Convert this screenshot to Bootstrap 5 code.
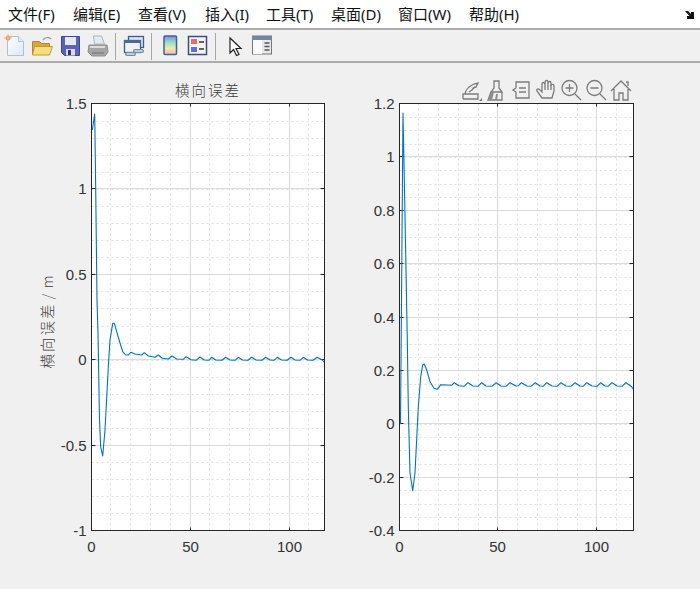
<!DOCTYPE html>
<html lang="zh">
<head>
    <meta charset="UTF-8">
    <title>Figure</title>
    <link rel="stylesheet" href="https://cdn.jsdelivr.net/npm/bootstrap@5.3.0/dist/css/bootstrap.min.css">
    <style>
        html, body { height: 100%; overflow: hidden; }
        body { background: #f0f0f0; font-family: "Noto Sans", "Noto Sans CJK SC", sans-serif; }

        .menu-strip { height: 30px; background: #fff; border-bottom: 2px solid #ababab; padding-left: 8px; }
        .menu-strip .nav-link { padding: 0; color: #111; font-size: 15px; line-height: 29px; width: 65px; white-space: nowrap; }
        .dock-arrow { right: 5px; top: 10px; }

        .tool-strip { height: 33px; background: #f0f0f0; border-bottom: 2px solid #ababab; padding: 1px 0 0 0; }
        .tool-btn { width: 28px; height: 28px; }
        .tool-sep { width: 1px; height: 27px; background: #a6a6a6; margin: 2px 4px 0 3px; }
        .tool-arrow { margin-left: 2px; }
        .tool-panel { margin-left: -2px; }
        .w-67 { width: 67px !important; }
        .w-61 { width: 61px !important; }
        .w-71 { width: 71px !important; }

        .figure-area { position: relative; padding-left: 30px; }
        .axes-tools { position: absolute; top: 15px; left: 460px; gap: 3px; }
        .axes-tool { width: 22px; height: 24px; }

        .plot-svg { display: block; width: 310px; height: 497px; flex: none; }
        .plot-svg text { font-family: "Liberation Sans", sans-serif; font-size: 15px; fill: #333; }
        .plot-svg text.cjk { font-family: "Noto Sans CJK SC", sans-serif; font-size: 14.5px; letter-spacing: 2px; fill: #3c3c3c; font-weight: 300; }
        .plot-svg text.cjk-y { word-spacing: -2px; }
        .ico-line { fill: none; stroke: #7c7c7c; stroke-width: 1.3; }
    </style>
</head>
<body>
    <div class="menu-strip position-relative">
        <ul class="nav flex-nowrap">
            <li class="nav-item"><a class="nav-link" href="#">文件(F)</a></li>
            <li class="nav-item"><a class="nav-link" href="#">编辑(E)</a></li>
            <li class="nav-item"><a class="nav-link w-67" href="#">查看(V)</a></li>
            <li class="nav-item"><a class="nav-link w-61" href="#">插入(I)</a></li>
            <li class="nav-item"><a class="nav-link" href="#">工具(T)</a></li>
            <li class="nav-item"><a class="nav-link w-67" href="#">桌面(D)</a></li>
            <li class="nav-item"><a class="nav-link w-71" href="#">窗口(W)</a></li>
            <li class="nav-item"><a class="nav-link" href="#">帮助(H)</a></li>
        </ul>
        <svg class="dock-arrow position-absolute" width="10" height="10" viewBox="0 0 10 10"><path d="M0 1h3l3 3V2h3v7H2V6h2.500z" fill="#111"/></svg>
    </div>

    <div class="tool-strip d-flex align-items-start">
        <svg class="tool-btn" viewBox="0 0 28 28">
            <defs><linearGradient id="pg" x1="0" y1="0" x2="1" y2="1"><stop offset="0" stop-color="#fff"/><stop offset="1" stop-color="#dbe8f5"/></linearGradient></defs>
            <path d="M7.500 5.500h11l5 5v14h-16z" fill="url(#pg)" stroke="#a9c1da"/>
            <path d="M18.500 5.500v5h5" fill="#e6eef7" stroke="#a9c1da"/>
            <circle cx="8" cy="7" r="2.500" fill="#f19a5c"/><path d="M8 3v8M4 7h8" stroke="#f4b48a"/>
        </svg>
        <svg class="tool-btn" viewBox="0 0 28 28">
            <path d="M4.500 10.500h7l2 2h8v11h-17z" fill="#d6a838" stroke="#b28a24"/>
            <path d="M6.500 15.500h18l-3 8.500h-17z" fill="#f7dc80" stroke="#c09a34"/>
            <path d="M15 9c2-3 6-3 8-1" fill="none" stroke="#93a3b3" stroke-width="1.5"/>
        </svg>
        <svg class="tool-btn" viewBox="0 0 28 28">
            <path d="M5.500 5.500h18v19h-15l-3-3z" fill="#5a63b8" stroke="#3e4796"/>
            <rect x="9" y="6" width="11" height="8" fill="#e8e8f4"/>
            <rect x="10" y="18" width="9" height="6.500" fill="#dcdce4"/><rect x="12" y="19" width="3" height="5" fill="#333a70"/>
        </svg>
        <svg class="tool-btn" viewBox="0 0 28 28">
            <path d="M9.500 5h8l3 8h-10z" fill="#e3ebf0" stroke="#aab4bb"/>
            <path d="M5 14h18l1 7-3 4H8l-4-4z" fill="#a5a5a5" stroke="#8c8c8c"/>
            <path d="M6 16h15" stroke="#dcdcdc" stroke-width="2"/><path d="M8 22h12" stroke="#707070"/>
        </svg>
        <div class="tool-sep"></div>
        <svg class="tool-btn" viewBox="0 0 28 28">
            <rect x="8.500" y="5.500" width="15" height="11" fill="#dfe6ee" stroke="#3e5c84" stroke-width="1.300"/>
            <rect x="4.500" y="9.500" width="16" height="12" fill="#eef2f6" stroke="#3e5c84" stroke-width="1.300"/>
            <path d="M4 9h17v3H4z" fill="#4a6a90"/>
            <path d="M7 23h7M15 20h7" stroke="#6f8dab" stroke-width="4" stroke-linecap="round" fill="none"/>
            <path d="M7 23h7M15 20h7" stroke="#d8e2ec" stroke-width="1.400" stroke-linecap="round" fill="none"/>
        </svg>
        <div class="tool-sep"></div>
        <svg class="tool-btn" viewBox="0 0 28 28">
            <defs><linearGradient id="cbar" x1="0" y1="0" x2="0" y2="1"><stop offset="0" stop-color="#7a90dc"/><stop offset=".35" stop-color="#9adccc"/><stop offset=".65" stop-color="#ecebaa"/><stop offset="1" stop-color="#f0bcb4"/></linearGradient></defs>
            <rect x="8" y="5" width="12.500" height="18.500" rx="1" fill="url(#cbar)" stroke="#44608a" stroke-width="1.500"/>
        </svg>
        <svg class="tool-btn" viewBox="0 0 28 28">
            <rect x="4.500" y="5.500" width="18" height="18" fill="#f2f4f8" stroke="#3a4f78" stroke-width="1.500"/>
            <rect x="7" y="8" width="6" height="5" fill="#ee6a6a"/><rect x="7" y="16" width="6" height="5" fill="#6a6ae0"/>
            <path d="M15 11h5M15 18h5" stroke="#333" stroke-width="1.400"/>
        </svg>
        <div class="tool-sep"></div>
        <svg class="tool-btn tool-arrow" viewBox="0 0 28 28">
            <path d="M8 7v15l3.500-3.500 3 6 2.500-1-3-6h5z" fill="#fff" stroke="#222" stroke-width="1.200"/>
        </svg>
        <svg class="tool-btn tool-panel" viewBox="0 0 28 28">
            <rect x="4.500" y="5" width="19" height="18" fill="#e8e8e8" stroke="#6d7780"/>
            <rect x="4" y="5" width="20" height="4" fill="#6f8a9e"/>
            <rect x="5" y="9" width="9" height="14" fill="#fbfbfb"/>
            <path d="M16.500 12h5M16.500 15.500h5M16.500 19h5" stroke="#555" stroke-width="1.400"/>
        </svg>
    </div>

    <div class="figure-area d-flex">
        <svg class="plot-svg" id="plotLeft" viewBox="30 63 310 497"></svg>
        <svg class="plot-svg" id="plotRight" viewBox="340 63 310 497"></svg>

        <div class="axes-tools position-absolute d-flex">
            <svg class="axes-tool" viewBox="0 0 22 24"><path class="ico-line" d="M3 21v-5h15v5H3M5 16c0-4 5-8 9-10l4-1-2 4c-2 0-3 1-4 3l-3 2"/><path d="M19 23l3-3v3z" fill="#7c7c7c"/></svg>
            <svg class="axes-tool" viewBox="0 0 22 24"><path class="ico-line" d="M9 3h5v7l3 4H6l3-4zM6 14l-3 8h14v-8"/><path d="M3 22l3-8h3l-2 8zM10 22l1-6 2 0-1 6z" fill="#8c8c8c"/></svg>
            <svg class="axes-tool" viewBox="0 0 22 24"><path class="ico-line" d="M6 4h13v16H6v-6l-3-2 3-2zM9 10h7M9 14h7"/></svg>
            <svg class="axes-tool" viewBox="0 0 22 24"><path class="ico-line" d="M7 20l-5-7c-1-2 1-3 3-1l2 2V6c0-2 2-2 3 0V4c0-2 3-2 3 0v1c1-2 3-2 3 0v2c1-1 3-1 3 1v5l-2 7z"/><path class="ico-line" d="M10 6v6M13 5v7M16 7v5"/></svg>
            <svg class="axes-tool" viewBox="0 0 22 24"><circle class="ico-line" cx="9.500" cy="10" r="7.500"/><path class="ico-line" d="M15 16l6 6M5.500 10h8M9.500 6v8"/></svg>
            <svg class="axes-tool" viewBox="0 0 22 24"><circle class="ico-line" cx="9.500" cy="10" r="7.500"/><path class="ico-line" d="M15 16l6 6M5.500 10h8"/></svg>
            <svg class="axes-tool" viewBox="0 0 22 24"><path class="ico-line" d="M1 13L11 3l10 10M4 11v11h5v-7h4v7h5V11M16 4h2v4"/></svg>
        </div>
    </div>

    <script>
        // same axes drawing for both plots, page coords in the viewBox
        function drawAxes(id, a) {
            var box = { l: a.left, r: a.left + a.width, t: 103.5, b: 530.5 };
            var out = '';
            var xPos = function (v) { return Math.round(a.x0 + v * 1.98) + .5; };
            var yPos = function (v) { return box.b - (v - a.yMin) / (a.yMax - a.yMin) * (box.b - box.t); };

            // minor grid
            for (var m = 10; m < 118; m += 10) {
                if (m % 50 == 0) continue;
                var mx = xPos(m);
                out += '<line x1="' + mx + '" x2="' + mx + '" y1="' + box.t + '" y2="' + box.b + '" stroke="#dedede" stroke-dasharray="2 3"/>';
            }
            var count = Math.round((a.yMax - a.yMin) / a.yMinor);
            for (var i = 1; i < count; i++) {
                var my = Math.round(box.b - i * (box.b - box.t) / count) + .5;
                out += '<line x1="' + box.l + '" x2="' + box.r + '" y1="' + my + '" y2="' + my + '" stroke="#dedede" stroke-dasharray="2 3"/>';
            }

            // major grid and ticks
            [50, 100].forEach(function (v) {
                var x = xPos(v);
                out += '<line x1="' + x + '" x2="' + x + '" y1="' + box.t + '" y2="' + box.b + '" stroke="#dcdcdc"/>';
                out += '<line x1="' + x + '" x2="' + x + '" y1="' + box.t + '" y2="' + (box.t + 3) + '" stroke="#262626"/>';
                out += '<line x1="' + x + '" x2="' + x + '" y1="' + box.b + '" y2="' + (box.b - 3) + '" stroke="#262626"/>';
                out += '<text x="' + x + '" y="552" text-anchor="middle">' + v + '</text>';
            });
            out += '<text x="' + box.l + '" y="552" text-anchor="middle">0</text>';
            a.yTicks.forEach(function (v) {
                var y = Math.round(yPos(v) - .5) + .5;
                out += '<line x1="' + box.l + '" x2="' + box.r + '" y1="' + y + '" y2="' + y + '" stroke="#dcdcdc"/>';
                out += '<line x1="' + box.l + '" x2="' + (box.l + 4) + '" y1="' + y + '" y2="' + y + '" stroke="#262626"/>';
                out += '<line x1="' + box.r + '" x2="' + (box.r - 4) + '" y1="' + y + '" y2="' + y + '" stroke="#262626"/>';
                out += '<text x="' + (box.l - 5) + '" y="' + (y + 5) + '" text-anchor="end">' + v + '</text>';
            });

            out += '<clipPath id="' + id + 'Clip"><rect x="' + box.l + '" y="' + box.t + '" width="' + a.width + '" height="427"/></clipPath>';
            out += '<polyline clip-path="url(#' + id + 'Clip)" fill="none" stroke="#0072bd" stroke-width="1.100" stroke-linejoin="round" points="' + a.curve + '"/>';
            out += '<rect x="' + box.l + '" y="' + box.t + '" width="' + a.width + '" height="427" fill="none" stroke="#262626"/>';
            if (a.extra) out += a.extra;

            document.getElementById(id).innerHTML =
                '<rect x="' + box.l + '" y="' + box.t + '" width="' + a.width + '" height="427" fill="#fff"/>' + out;
        }

        drawAxes('plotLeft', {
            left: 91.5, width: 233, x0: 90.5, yMin: -1, yMax: 1.5, yMinor: .1,
            yTicks: [1.5, 1, 0.5, 0, -0.5, -1],
            curve: '92.3,130 94.700,114 95.700,189 97,300 98,333 99.500,420 100.700,447 102.700,456 105,430 108.300,367 110,340 112.700,323.300 114.300,323.300 116.700,331.700 120,343 122.700,351.700 125.700,355 128.300,355 130.700,352.300 135,354 141.700,355 144.300,352.700 148.300,356 155,357.300 158.300,355 162.300,358.300 168.300,359 172,356 176.700,359 183.300,359.300 186,356.700 191,359.700 196,360.300 200,357 204.300,360 209,360.300 211.700,357.300 215.700,360 222,360.300 225.700,357.300 230,360 235,360.300 238.300,357.300 242.500,360 248,360.300 251.700,357.300 256,360 262,360.300 265.700,357.300 270,360 274,360.300 277.300,357.300 281.500,360 287,360.300 291,357.300 295,360 300,360.300 303.300,357.300 307.500,360 313,360.300 317.300,357.300 322.300,360 325,363',
            extra: '<text class="cjk" x="208" y="96" text-anchor="middle">横向误差</text>' +
                   '<text class="cjk cjk-y" transform="translate(53 321) rotate(-90)" text-anchor="middle">横向误差 / m</text>'
        });

        drawAxes('plotRight', {
            left: 399.5, width: 234, x0: 398.4, yMin: -0.4, yMax: 1.2, yMinor: .05,
            yTicks: [1.2, 1, 0.8, 0.6, 0.4, 0.2, 0, -0.2, -0.4],
            curve: '400.500,424 403,113 404.500,189 407.300,340 408.300,407 410,473 412.700,490.700 415,473 418.300,407 420.700,376.700 422.700,365 424.300,364 426.700,370 430,381.700 434,388.300 437.300,389.300 440.700,384.700 451.700,385.300 454.300,382.700 459,385.700 464,386.300 468,382.700 473,386 478,386.300 481.700,382.700 486,386 492,386.300 496,382.700 501,386 506,386.300 510,382.700 516,386 518.500,385.700 521.300,382.700 527,386 531,386.300 535.300,382.700 540,386 543,386.300 546.700,382.700 552,386 557,386.300 561,382.700 566,386 571,386.300 575,382.700 580,386 583,386.300 586.700,382.700 592,386 597,386.300 600.700,382.700 605,386 608,386.300 612,382.700 617,386 622,386.300 626,382.700 631.700,386.700 634.300,390.700'
        });
    </script>
    <script src="https://cdn.jsdelivr.net/npm/bootstrap@5.3.0/dist/js/bootstrap.bundle.min.js"></script>
</body>
</html>
